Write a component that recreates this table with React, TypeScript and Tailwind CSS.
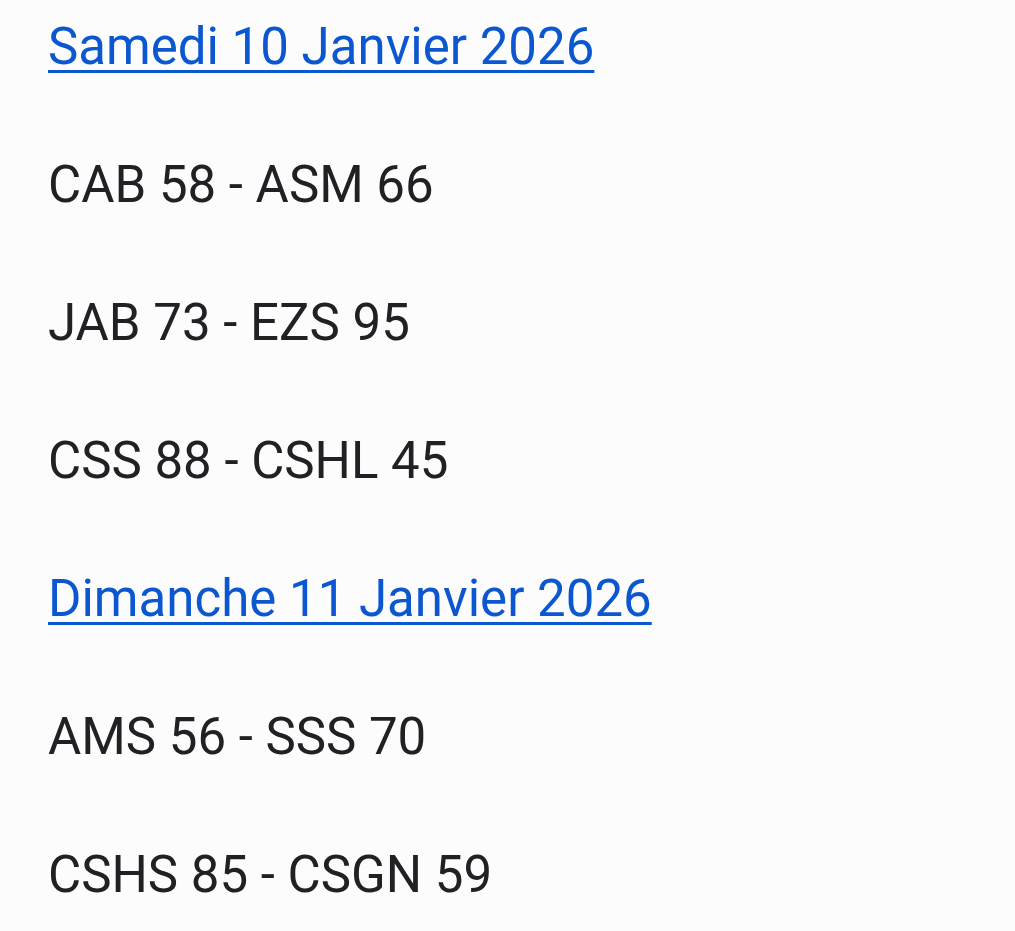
const days = [
  {
    date: "Samedi 10 Janvier 2026",
    games: ["CAB 58 - ASM 66", "JAB 73 - EZS 95", "CSS 88 - CSHL 45"],
  },
  {
    date: "Dimanche 11 Janvier 2026",
    games: ["AMS 56 - SSS 70", "CSHS 85 - CSGN 59"],
  },
];

export default function App() {
  return (
    <div
      className="min-h-screen bg-[#fcfcfc] px-[48px] pt-[16px]"
      style={{ fontFamily: "Roboto, 'Noto Sans', sans-serif" }}
    >
      <div className="flex flex-col gap-[76px] text-[51px] leading-[62px]">
        {days.map((day) => (
          <div key={day.date} className="contents">
            <a
              href="#"
              className="w-fit text-[#0b57d0] underline decoration-[3px] underline-offset-[6px]"
            >
              {day.date}
            </a>
            {day.games.map((g) => (
              <p key={g} className="text-[#202124]">
                {g}
              </p>
            ))}
          </div>
        ))}
      </div>
    </div>
  );
}
